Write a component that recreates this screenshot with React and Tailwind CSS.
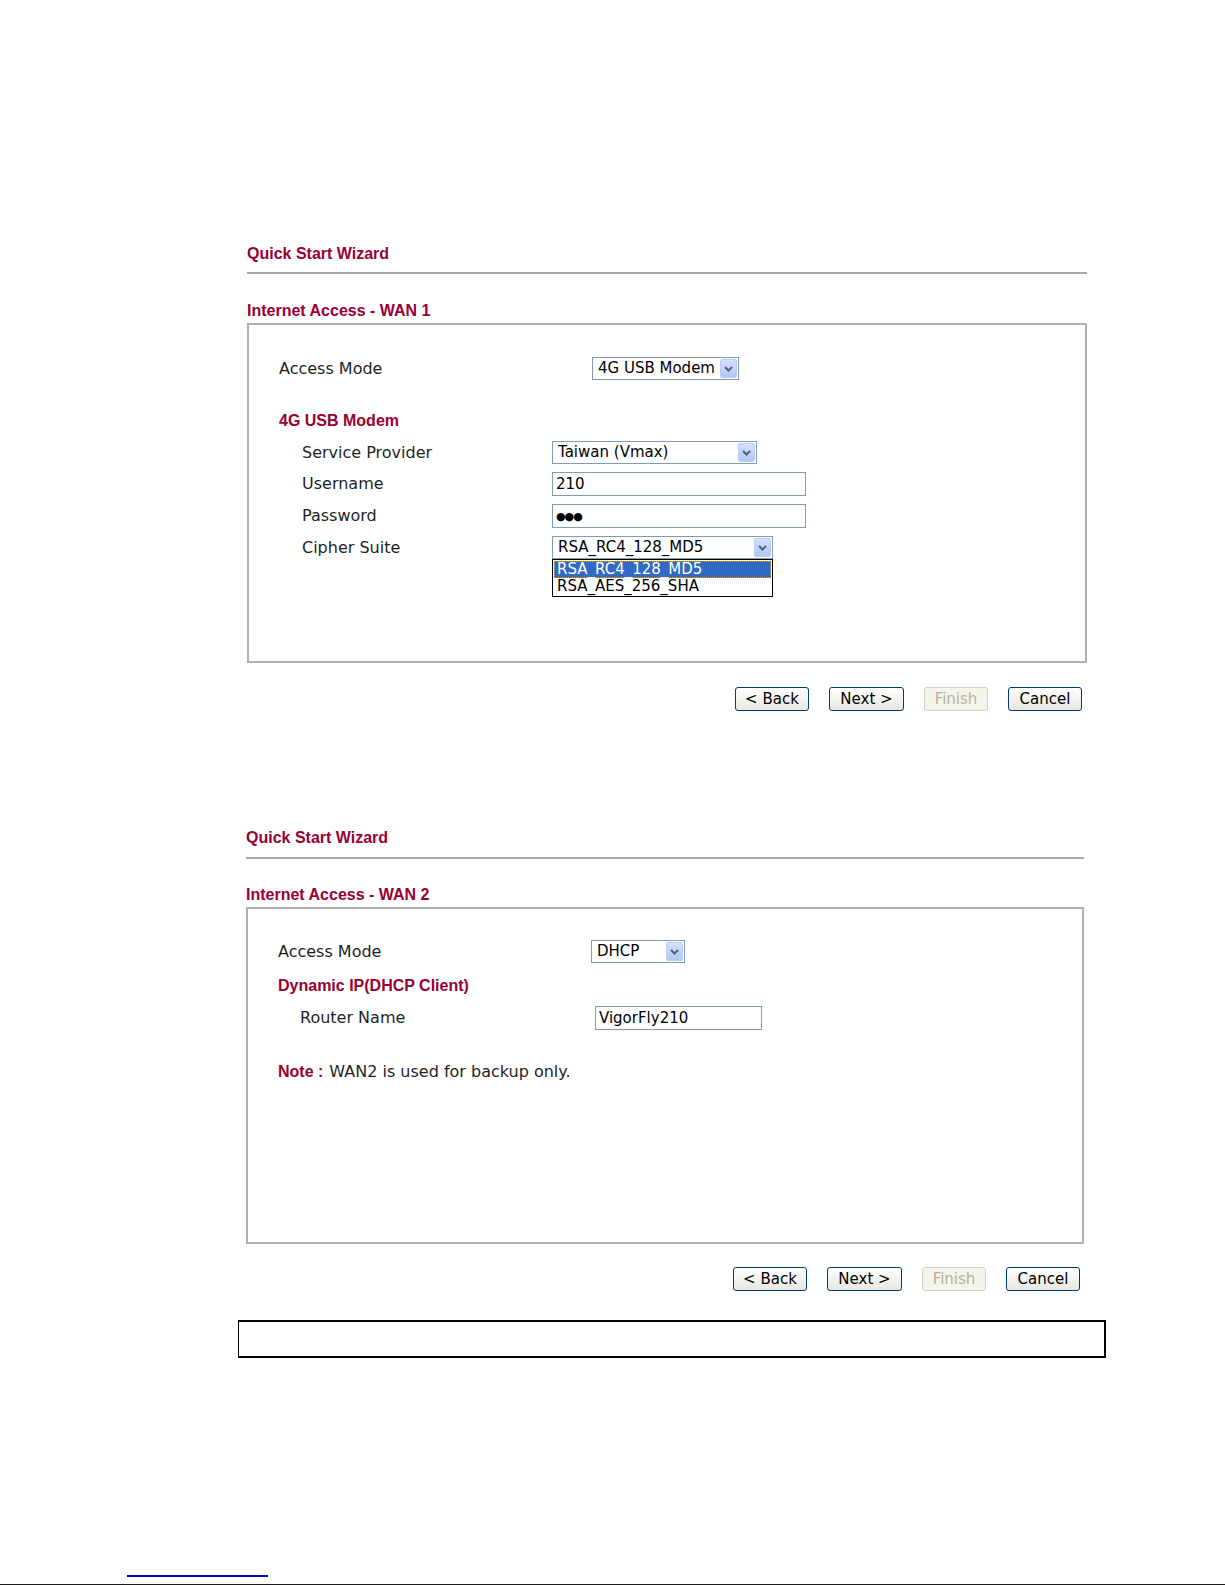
const LABEL = "font-['DejaVu_Sans',Verdana,sans-serif] text-[16px] leading-[20px] text-[#1f1f1f]"
const FONT = "font-['DejaVu_Sans',Verdana,sans-serif] text-[15px]"
const FIELD = `${FONT} text-black`
const HEAD = "font-['Liberation_Sans',Arial,sans-serif] text-[16px] font-bold text-[#990033] leading-[20px]"

function Chevron() {
  return (
    <svg width="9" height="6" viewBox="0 0 9 6" aria-hidden>
      <path d="M1 1 L4.5 4.5 L8 1" fill="none" stroke="#4d6185" strokeWidth="2" />
    </svg>
  )
}

function Select({ value, width, children }) {
  return (
    <div
      className={`relative flex h-[23px] items-center border border-[#7f9db9] bg-white pl-[5px] ${width}`}
    >
      <span className={`${FIELD} flex-1 leading-[21px]`}>{value}</span>
      <span className="mr-px flex h-[19px] w-[17px] items-center justify-center rounded-[2px] border border-[#b9cdf7] bg-gradient-to-b from-[#d4e0fc] to-[#b3c7f5]">
        <Chevron />
      </span>
      {children}
    </div>
  )
}

function Input({ value, width, dots }) {
  return (
    <div className={`flex h-[24px] items-center border border-[#7f9db9] bg-white pl-[3px] ${width}`}>
      {dots ? (
        <span className="font-['DejaVu_Sans',sans-serif] text-[11px] leading-none tracking-[-1px] text-black">
          ●●●
        </span>
      ) : (
        <span className={`${FIELD} leading-[22px]`}>{value}</span>
      )}
    </div>
  )
}

function Button({ label, width, disabled }) {
  return (
    <div
      className={[
        'flex h-[24px] items-center justify-center rounded-[3px] border',
        FONT,
        width,
        disabled
          ? 'border-[#d2d0c4] bg-[#f5f4ea] text-[#b5b2a4]'
          : 'border-[#003c74] bg-gradient-to-b from-white to-[#e8e7e0] text-black',
      ].join(' ')}
    >
      {label}
    </div>
  )
}

function Buttons({ pr }) {
  return (
    <div className={`flex justify-end gap-[20px] ${pr}`}>
      <Button label="< Back" width="w-[74px]" />
      <Button label="Next >" width="w-[75px]" />
      <Button label="Finish" width="w-[64px]" disabled />
      <Button label="Cancel" width="w-[74px]" />
    </div>
  )
}

function Row({ label, labelWidth, indent, children }) {
  return (
    <div className="flex items-center">
      <div className={`${LABEL} shrink-0 ${labelWidth} ${indent}`}>{label}</div>
      {children}
    </div>
  )
}

export default function App() {
  return (
    <div className="flow-root h-[1585px] w-full overflow-hidden bg-white">
      {/* WAN 1 */}
      <section className="ml-[247px] w-[840px] pt-[244px]">
        <div className={HEAD}>Quick Start Wizard</div>
        <div className="mt-[8px] h-[2px] bg-[#a9a9a9]" />
        <div className={`${HEAD} mt-[27px]`}>Internet Access - WAN 1</div>
        <div className="mt-[2px] h-[340px] border-2 border-[#b0b0b0] pl-[30px] pt-[32px]">
          <Row label="Access Mode" labelWidth="w-[313px]">
            <Select value="4G USB Modem" width="w-[147px]" />
          </Row>
          <div className={`${HEAD} mt-[31px]`}>4G USB Modem</div>
          <div className="mt-[10px] flex flex-col gap-[8px]">
            <Row label="Service Provider" labelWidth="w-[273px]" indent="pl-[23px]">
              <Select value="Taiwan (Vmax)" width="w-[205px]" />
            </Row>
            <Row label="Username" labelWidth="w-[273px]" indent="pl-[23px]">
              <Input value="210" width="w-[254px]" />
            </Row>
            <Row label="Password" labelWidth="w-[273px]" indent="pl-[23px]">
              <Input dots width="w-[254px]" />
            </Row>
            <Row label="Cipher Suite" labelWidth="w-[273px]" indent="pl-[23px]">
              <Select value="RSA_RC4_128_MD5" width="w-[221px]">
                <div className="absolute left-[-1px] top-[22px] w-[221px] border border-black bg-white p-px">
                  <div className={`${FONT} h-[17px] border border-dotted border-[#c8a040] bg-[#316ac5] pl-[2px] leading-[15px] text-white`}>
                    RSA_RC4_128_MD5
                  </div>
                  <div className={`${FIELD} h-[17px] pl-[3px] leading-[17px]`}>RSA_AES_256_SHA</div>
                </div>
              </Select>
            </Row>
          </div>
        </div>
        <div className="mt-[24px]">
          <Buttons pr="pr-[5px]" />
        </div>
      </section>

      {/* WAN 2 */}
      <section className="ml-[246px] mt-[117px] w-[838px]">
        <div className={HEAD}>Quick Start Wizard</div>
        <div className="mt-[9px] h-[2px] bg-[#a9a9a9]" />
        <div className={`${HEAD} mt-[26px]`}>Internet Access - WAN 2</div>
        <div className="mt-[2px] h-[337px] border-2 border-[#b0b0b0] pl-[30px] pt-[31px]">
          <Row label="Access Mode" labelWidth="w-[313px]">
            <Select value="DHCP" width="w-[94px]" />
          </Row>
          <div className={`${HEAD} mt-[13px]`}>Dynamic IP(DHCP Client)</div>
          <div className="mt-[10px]">
            <Row label="Router Name" labelWidth="w-[317px]" indent="pl-[22px]">
              <Input value="VigorFly210" width="w-[167px]" />
            </Row>
          </div>
          <div className="mt-[32px] flex h-[20px] items-center gap-[6px]">
            <span className="font-['Liberation_Sans',Arial,sans-serif] text-[16px] font-bold text-[#990033]">
              Note :
            </span>
            <span className={LABEL}>WAN2 is used for backup only.</span>
          </div>
        </div>
        <div className="mt-[23px]">
          <Buttons pr="pr-[4px]" />
        </div>
      </section>

      {/* empty framed box */}
      <div className="ml-[238px] mt-[29px] h-[38px] w-[868px] border-b-2 border-l border-r-2 border-t-2 border-black" />

      {/* footer rules */}
      <div className="ml-[127px] mt-[217px] h-[2px] w-[141px] bg-[#0000cc]" />
      <div className="mt-[7px] h-px w-full bg-[#1a1a1a]" />
    </div>
  )
}
